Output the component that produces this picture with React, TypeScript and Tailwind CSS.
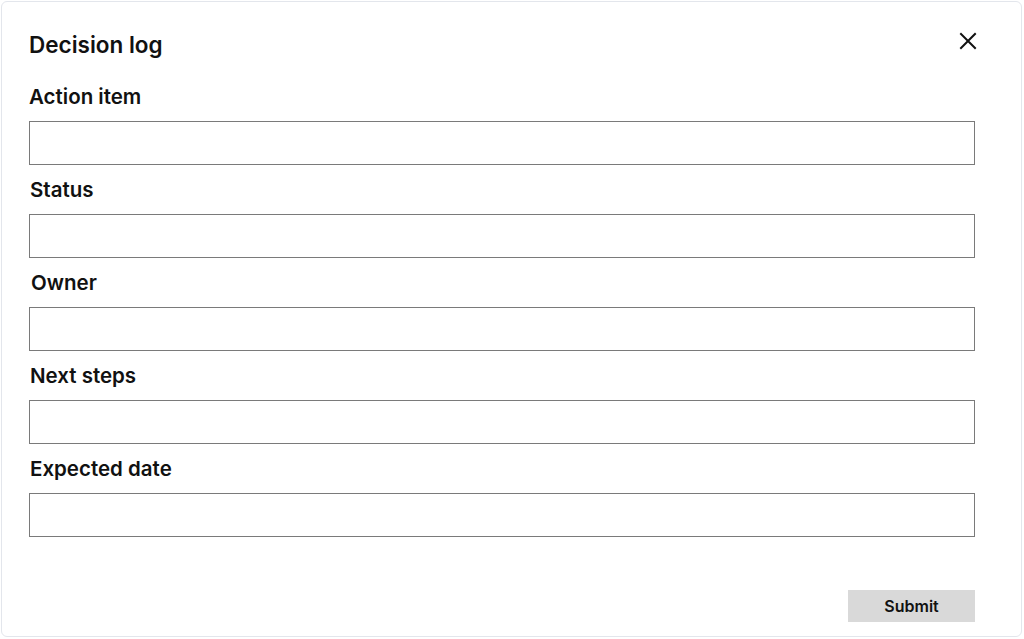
import React from "react";

const fields = [
  { label: "Action item", offset: "pl-0" },
  { label: "Status", offset: "pl-px" },
  { label: "Owner", offset: "pl-[2px]" },
  { label: "Next steps", offset: "pl-px" },
  { label: "Expected date", offset: "pl-px" },
];

export default function App() {
  return (
    <div className="w-[1024px] h-[639px] bg-white p-px" style={{ fontFamily: "Inter, 'Noto Sans', sans-serif" }}>
      <div className="w-[1021px] h-[636px] rounded-[6px] border border-[#e3e6ec] bg-white pl-[27px] pt-[28px] flex flex-col">
        <div className="w-[947px] flex items-start justify-between">
          <h1 className="text-[22.5px] leading-[29px] font-semibold text-[#111]">Decision log</h1>
          <button className="mt-[1px] mr-[-2px] w-[20px] h-[20px] flex items-center justify-center text-[#111]" aria-label="Close">
            <svg width="18" height="18" viewBox="0 0 18 18" fill="none" stroke="currentColor" strokeWidth="2" strokeLinecap="square">
              <path d="M2 2 L16 16 M16 2 L2 16" />
            </svg>
          </button>
        </div>
        <div className="mt-[26px] flex flex-col">
          {fields.map((f) => (
            <div key={f.label} className="flex flex-col">
              <label className={`text-[20.5px] leading-[24px] font-semibold text-[#111] ${f.offset}`}>{f.label}</label>
              <input className="mt-[12px] mb-[13px] w-[946px] h-[44px] border border-[#7a7a7a] bg-white outline-none px-2" />
            </div>
          ))}
        </div>
        <div className="w-[946px] flex justify-end mt-[40px]">
          <button className="w-[127px] h-[32px] bg-[#d9d9d9] text-[16px] font-semibold text-[#111]">Submit</button>
        </div>
      </div>
    </div>
  );
}
